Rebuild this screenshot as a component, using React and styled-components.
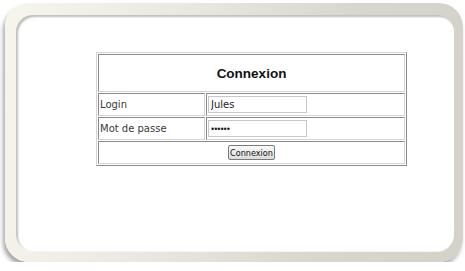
import React from "react";
import styled, { createGlobalStyle } from "styled-components";

const Global = createGlobalStyle`
  html, body { margin: 0; padding: 0; background: #fff; }
  body { font-family: "DejaVu Sans", Verdana, sans-serif; }
`;

const Frame = styled.div`
  box-sizing: border-box;
  margin: 3px 0 0 5px;
  width: 458px;
  height: 259px;
  border-radius: 24px;
  padding: 12px 9px 11px 11px;
  background: linear-gradient(100deg, #f7f5ec 0%, #eae8e0 35%, #d9d6ce 70%, #d4d1c9 100%);
  box-shadow: -2px 4px 4px rgba(0, 0, 0, 0.35);
`;

const Inner = styled.div`
  box-sizing: border-box;
  height: 100%;
  background: #fff;
  border-radius: 17px;
  box-shadow: inset 2px 2px 2px rgba(0, 0, 0, 0.25), 0 1px 0 #f4f3ee;
  padding: 37px 0 0 80px;
`;

const Table = styled.table`
  width: 311px;
  border-collapse: separate;
  border-spacing: 1px;
  border: 1px solid;
  border-color: #d4d4d4 #8a8a8a #8a8a8a #d4d4d4;
  font-family: "DejaVu Sans", Verdana, sans-serif;
  font-size: 10px;
  color: #3a3a3a;
`;

const Cell = styled.td`
  border: 1px solid;
  border-color: #8a8a8a #d4d4d4 #d4d4d4 #8a8a8a;
  padding: 1px;
  height: ${(p) => p.$h || 19}px;
  width: ${(p) => (p.$w ? `${p.$w}px` : "auto")};
  text-align: ${(p) => (p.$center ? "center" : "left")};
  vertical-align: middle;
`;

const Title = styled.h1`
  margin: 0;
  font-family: "Liberation Sans", Arial, sans-serif;
  font-size: 13.5px;
  font-weight: bold;
  color: #111;
  text-align: center;
`;

const Input = styled.input`
  box-sizing: border-box;
  width: 99px;
  height: 17px;
  margin: 0;
  padding: 0 2px;
  border: 1px solid #c8c8c8;
  font-family: ${(p) => (p.$secret ? '"Liberation Sans", Arial' : '"DejaVu Sans", Verdana')}, sans-serif;
  font-size: ${(p) => (p.$secret ? 9 : 10)}px;
  color: #222;
  outline: none;
`;

const Button = styled.button`
  box-sizing: border-box;
  width: 47px;
  height: 15px;
  padding: 0;
  margin: 0;
  border: 1px solid #7a7a7a;
  border-radius: 2px;
  background: linear-gradient(#fafafa, #dcdcdc);
  font-family: "DejaVu Sans Condensed", "DejaVu Sans", sans-serif;
  font-size: 9px;
  color: #111;
`;

export default function App() {
  return (
    <>
      <Global />
      <Frame>
        <Inner>
          <Table>
            <tbody>
              <tr>
                <Cell colSpan={2} $h={34} $center>
                  <Title>Connexion</Title>
                </Cell>
              </tr>
              <tr>
                <Cell $w={103}>Login</Cell>
                <Cell>
                  <Input type="text" defaultValue="Jules" />
                </Cell>
              </tr>
              <tr>
                <Cell $w={103}>Mot de passe</Cell>
                <Cell>
                  <Input type="password" defaultValue="secret" $secret />
                </Cell>
              </tr>
              <tr>
                <Cell colSpan={2} $center>
                  <Button>Connexion</Button>
                </Cell>
              </tr>
            </tbody>
          </Table>
        </Inner>
      </Frame>
    </>
  );
}
